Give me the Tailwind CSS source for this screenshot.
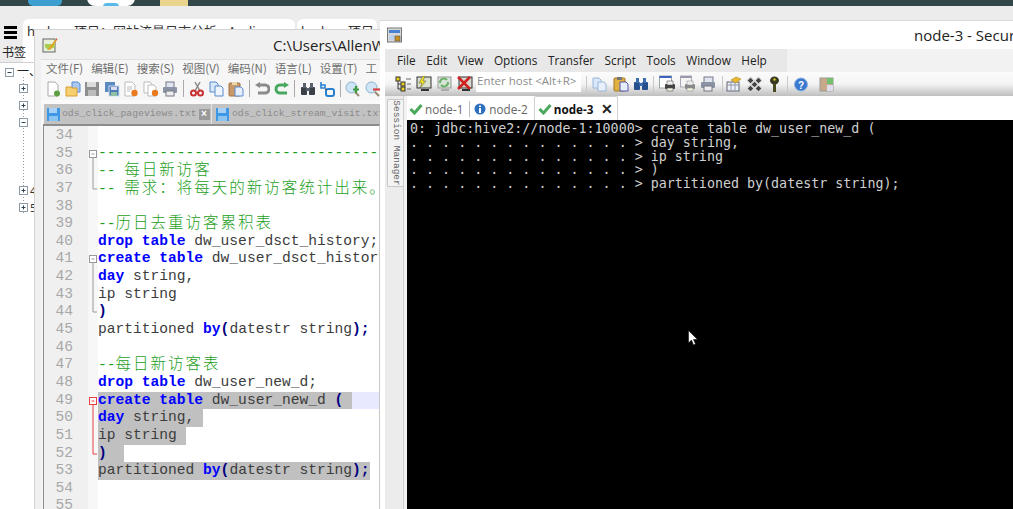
<!DOCTYPE html>
<html lang="zh-CN">
<head>
    <meta charset="UTF-8">
    <title>node-3 - SecureCRT</title>
    <script src="https://cdn.jsdelivr.net/npm/@tailwindcss/browser@4"></script>
</head>
<body class="bg-[#ececec]">
<div class="relative w-[1013px] h-[509px] overflow-hidden bg-[#ececec] font-['Noto_Sans','Noto_Sans_CJK_SC',sans-serif]">

    <!-- desktop strip -->
    <div class="relative h-[6px] bg-[#33474a] overflow-hidden">
        <div class="absolute left-[28px] top-[-10px] w-[34px] h-[16px] rounded-[5px] bg-[#3d9fd0]"></div>
        <div class="absolute left-[87px] top-[-12px] w-[48px] h-[18px] rounded-[8px] bg-white"></div>
        <div class="absolute left-[103px] top-[3px] w-[16px] h-[8px] rounded-full bg-[#58b9ea]"></div>
        <div class="absolute left-[160px] top-[-4px] w-[28px] h-[10px] bg-[#e8d48c]"></div>
    </div>

    <!-- browser behind -->
    <div class="h-[13px] bg-[#ececec]"></div>
    <div class="flex h-[43px] items-start">
        <div class="w-[23px] pl-[4px] pt-[7px] flex flex-col gap-[2.5px] shrink-0">
            <div class="w-[13px] h-[2.5px] bg-black"></div>
            <div class="w-[13px] h-[2.5px] bg-black"></div>
            <div class="w-[13px] h-[2.5px] bg-black"></div>
        </div>
        <div class="w-[272px] h-[43px] bg-white rounded-t-[6px] pl-[4px] pt-[2px] text-[13px] leading-[20px] text-[#333] whitespace-nowrap overflow-hidden">hadoop项目：网站流量日志分析 - Andi</div>
        <div class="ml-[2px] w-[80px] h-[43px] bg-white rounded-t-[6px] pl-[4px] pt-[2px] text-[13px] leading-[20px] text-[#333] whitespace-nowrap overflow-hidden">hadoop项目</div>
    </div>
    <div class="w-[34px] h-[10px] mt-[-16px] pl-[2px] text-[12px] leading-[14px] text-[#222] whitespace-nowrap">书签</div>
    <div class="relative mt-[6px] w-[34px] h-[447px] bg-white border-t border-[#cfcfcf] overflow-hidden">
        <svg class="absolute left-0 top-0" width="34" height="160" viewBox="0 0 34 160" fill="none">
            <path d="M23.5 14V152" stroke="#999" stroke-dasharray="1 2"/>
            <g stroke="#8d9aa8" fill="#fff">
                <rect x="5.5" y="5.5" width="8" height="8"/><rect x="19.5" y="21.5" width="8" height="8"/><rect x="19.5" y="38.5" width="8" height="8"/><rect x="19.5" y="55.5" width="8" height="8"/><rect x="19.5" y="123.5" width="8" height="8"/><rect x="19.5" y="140.5" width="8" height="8"/>
            </g>
            <path d="M7.5 9.5h4M21.5 59.5h4" stroke="#345"/>
            <path d="M21.5 25.5h4M23.5 23.5v4M21.5 42.5h4M23.5 40.5v4M21.5 127.5h4M23.5 125.5v4M21.5 144.5h4M23.5 142.5v4" stroke="#345"/>
        </svg>
        <div class="absolute left-[17px] top-[1px] text-[12px] leading-[16px] text-[#222]">一、</div>
        <div class="absolute left-[30px] top-[120px] text-[11px] leading-[16px] text-[#333]">4</div>
        <div class="absolute left-[30px] top-[137px] text-[11px] leading-[16px] text-[#333]">5</div>
    </div>

    <!-- notepad++ window -->
    <div class="absolute left-[34px] top-[29px] w-[346px] h-[480px] bg-[#f0f0f0] border-l border-t border-[#d4d4d4] flex flex-col overflow-hidden">
        <div class="h-[29px] shrink-0 flex items-center pl-[7px] relative">
            <svg width="16" height="16" viewBox="0 0 16 16"><rect x="1" y="2" width="12" height="13" fill="#e8efd8" stroke="#666"/><path d="M3 10l3 3 7-3V7H3z" fill="#a8cc50"/><path d="M6 12l8-10 1 1-7 10z" fill="#e8a020"/><path d="M14 1l1.500 1.500-1 1z" fill="#c02020"/></svg>
            <span class="absolute left-[238px] top-[3px] text-[15px] leading-[24px] text-[#222] whitespace-nowrap font-['Open_Sans',sans-serif]">C:\Users\AllenW</span>
        </div>
        <div class="ml-[6px] flex-1 flex flex-col bg-[#f6f6f6] min-h-0 border-t border-[#e0e0e0]">
            <!-- menu -->
            <div class="h-[17px] shrink-0 flex items-center pl-[5px] gap-[8px] text-[11.500px] leading-[17px] text-[#6e6e6e] whitespace-nowrap overflow-hidden font-['Noto_Sans_CJK_SC',sans-serif]">
                <span>文件(F)</span><span>编辑(E)</span><span>搜索(S)</span><span>视图(V)</span><span>编码(N)</span><span>语言(L)</span><span>设置(T)</span><span>工</span>
            </div>
            <!-- toolbar -->
            <div class="h-[23px] shrink-0 flex items-center pl-[4px] gap-[3.500px]">
                <svg class="shrink-0" width="16" height="16" viewBox="0 0 16 16"><path d="M3 1h7l3 3v11H3z" fill="#fff" stroke="#aaa"/><circle cx="12" cy="12.500" r="3" fill="#5aa040"/></svg>
                <svg class="shrink-0" width="16" height="16" viewBox="0 0 16 16"><path d="M7 1h6l2 2v8H7z" fill="#a8c8f0" stroke="#5a8ad0"/><path d="M1 6h5l1 1h5v8H1z" fill="#f5cf70" stroke="#d8a030"/></svg>
                <svg class="shrink-0" width="16" height="16" viewBox="0 0 16 16"><rect x="1" y="1" width="14" height="14" fill="#8e8e8e"/><rect x="3" y="1" width="9" height="5" fill="#ddd"/><rect x="4" y="9" width="8" height="6" fill="#bbb"/></svg>
                <svg class="shrink-0" width="16" height="16" viewBox="0 0 16 16"><rect x="1" y="1" width="10" height="10" fill="#5a8ac0"/><rect x="5" y="5" width="10" height="10" fill="#4a7ab8" stroke="#cde"/><rect x="7" y="6" width="6" height="3" fill="#dde"/><rect x="7" y="11" width="6" height="4" fill="#8fc0a0"/></svg>
                <svg class="shrink-0" width="16" height="16" viewBox="0 0 16 16"><path d="M2 1h7l3 3v11H2z" fill="#fff" stroke="#bbb"/><path d="M4 6h5M4 8h5M4 10h3" stroke="#bbb"/><circle cx="11.500" cy="12" r="3.200" fill="#ea7a20"/></svg>
                <svg class="shrink-0" width="16" height="16" viewBox="0 0 16 16"><path d="M1 1h6l2 2v9H1z" fill="#fff" stroke="#bbb"/><path d="M5 4h6l2 2v9H5z" fill="#fff" stroke="#bbb"/><circle cx="12" cy="12" r="3.200" fill="#ea7a20"/></svg>
                <svg class="shrink-0" width="16" height="16" viewBox="0 0 16 16"><rect x="4" y="1" width="8" height="6" fill="#dfe6f0" stroke="#778"/><rect x="1" y="6" width="14" height="6" rx="1" fill="#8a94a4"/><rect x="4" y="10" width="8" height="5" fill="#eee" stroke="#778"/></svg>
                <div class="w-px h-[17px] bg-[#aaa] mx-[1.500px] shrink-0"></div>
                <svg class="shrink-0" width="16" height="16" viewBox="0 0 16 16" fill="none"><path d="M11 1L6 10M6 1l5 9" stroke="#888" stroke-width="1.500"/><circle cx="4.500" cy="12" r="2.500" stroke="#c83030" stroke-width="2"/><circle cx="11.500" cy="12" r="2.500" stroke="#c83030" stroke-width="2"/></svg>
                <svg class="shrink-0" width="16" height="16" viewBox="0 0 16 16"><path d="M1 1h6l2 2v8H1z" fill="#d8e8fa" stroke="#5a8ad0"/><path d="M6 5h6l2 2v8H6z" fill="#eef5fd" stroke="#5a8ad0"/></svg>
                <svg class="shrink-0" width="16" height="16" viewBox="0 0 16 16"><rect x="1" y="2" width="11" height="13" rx="1" fill="#c89868" stroke="#a07040"/><rect x="4" y="1" width="5" height="3" fill="#e8d8a8"/><path d="M7 6h6l2 2v7H7z" fill="#e4effb" stroke="#5a8ad0"/></svg>
                <div class="w-px h-[17px] bg-[#aaa] mx-[1px] shrink-0"></div>
                <svg class="shrink-0" width="16" height="16" viewBox="0 0 16 16" fill="none"><path d="M5 4h6a3 3 0 0 1 0 8H4" stroke="#8a8a8a" stroke-width="3"/><path d="M1 4l5-3v6z" fill="#8a8a8a"/></svg>
                <svg class="shrink-0" width="16" height="16" viewBox="0 0 16 16" fill="none"><path d="M11 4H6a3 3 0 0 0 0 8h7" stroke="#48a860" stroke-width="3"/><path d="M15 4l-5-3v6z" fill="#48a860"/></svg>
                <div class="w-px h-[17px] bg-[#aaa] mx-[1px] shrink-0"></div>
                <svg class="shrink-0" width="16" height="16" viewBox="0 0 16 16"><rect x="1" y="6" width="6" height="8" rx="1" fill="#3a4048"/><rect x="9" y="6" width="6" height="8" rx="1" fill="#3a4048"/><rect x="3" y="2" width="3" height="5" fill="#59626c"/><rect x="10" y="2" width="3" height="5" fill="#59626c"/><rect x="6" y="7" width="4" height="3" fill="#59626c"/></svg>
                <svg class="shrink-0" width="16" height="16" viewBox="0 0 16 16" fill="none"><path d="M2 1v6h4V4H2" stroke="#2a80d0" stroke-width="1.600"/><rect x="7" y="8" width="8" height="7" rx="2" stroke="#2a80d0" stroke-width="2"/><path d="M6 8l2 1" stroke="#3a4048"/></svg>
                <div class="w-px h-[17px] bg-[#aaa] mx-[1px] shrink-0"></div>
                <svg class="shrink-0" width="16" height="16" viewBox="0 0 16 16"><circle cx="6.500" cy="6.500" r="5.500" fill="#cfe4f4" stroke="#8ab0cc"/><path d="M10 11l4 4" stroke="#9a8a70" stroke-width="2"/><path d="M11 5v7M8 8.500h6" stroke="#3a9a40" stroke-width="2.200"/></svg>
                <svg class="shrink-0" width="16" height="16" viewBox="0 0 16 16"><circle cx="6.500" cy="6.500" r="5.500" fill="#cfe4f4" stroke="#8ab0cc"/><path d="M10 11l4 4" stroke="#9a8a70" stroke-width="2"/><path d="M8 8.500h7" stroke="#d84040" stroke-width="2.200"/></svg>
            </div>
            <div class="h-[4px] shrink-0 bg-[#fafafa]"></div>
            <!-- file tabs -->
            <div class="h-[20px] shrink-0 ml-[3px] flex bg-[#c2c2c2] text-[9.750px] leading-[20px] text-[#8a8a8a] whitespace-nowrap font-['Liberation_Mono',monospace]">
                <div class="w-[168px] shrink-0 flex items-center pl-[2px] border-r border-[#e4e4e4]">
                    <svg class="shrink-0" width="15" height="15" viewBox="0 0 15 15"><rect x="1" y="1" width="13" height="13" fill="#3f97e8"/><rect x="3" y="1" width="8" height="5" fill="#a8d0f4"/><rect x="3" y="9" width="9" height="5" fill="#8cc4f0"/></svg>
                    <span class="ml-[1px]">ods_click_pageviews.txt</span>
                    <span class="ml-[2px] w-[11px] h-[11px] bg-[#9a9a9a] text-white text-[10px] leading-[11px] text-center font-bold">×</span>
                </div>
                <div class="flex-1 flex items-center pl-[3px] overflow-hidden">
                    <svg class="shrink-0" width="15" height="15" viewBox="0 0 15 15"><rect x="1" y="1" width="13" height="13" fill="#3f97e8"/><rect x="3" y="1" width="8" height="5" fill="#a8d0f4"/><rect x="3" y="9" width="9" height="5" fill="#8cc4f0"/></svg>
                    <span class="ml-[2px]">ods_click_stream_visit.txt</span>
                </div>
            </div>
            <!-- code -->
            <div class="ml-[2px] flex-1 min-h-0 flex flex-col [&>div]:shrink-0 [&>div>div]:shrink-0 bg-white border-l border-t-2 border-[#8c8c8c] border-r border-r-[#c8c8c8] overflow-hidden text-[14.600px] leading-[17.650px] text-[#3c3c3c] whitespace-pre font-['Liberation_Mono',monospace]">
                <div class="flex h-[1px]"><div class="w-[44px] bg-[#f0f0f0]"></div><div class="w-[10px] bg-[#f7f7f7]"></div></div>
                <div class="flex h-[17.650px]"><div class="w-[44px] pr-[15px] text-right text-[#a8a8a8] bg-[#f0f0f0]">34</div><div class="w-[10px] bg-[#f7f7f7]"></div><div></div></div>
                <div class="flex h-[17.650px]"><div class="w-[44px] pr-[15px] text-right text-[#a8a8a8] bg-[#f0f0f0]">35</div><div class="w-[10px] bg-[#f7f7f7]"><svg width="10" height="18" viewBox="0 0 10 18" fill="none" stroke="#999"><rect x="1.500" y="5.500" width="7" height="7" fill="#fff"/><path d="M3.500 9h3M5 13v5"/></svg></div><div class="text-[#1ba01b]">----------------------------------------</div></div>
                <div class="flex h-[17.650px]"><div class="w-[44px] pr-[15px] text-right text-[#a8a8a8] bg-[#f0f0f0]">36</div><div class="w-[10px] bg-[#f7f7f7]"><svg width="10" height="18" viewBox="0 0 10 18" fill="none" stroke="#999"><path d="M5 0v18"/></svg></div><div class="mt-[-2px] text-[#1ba01b]">-- <span class="text-[15.500px] tracking-[2px] font-['Noto_Sans_CJK_SC',sans-serif] font-light">每日新访客</span></div></div>
                <div class="flex h-[17.650px]"><div class="w-[44px] pr-[15px] text-right text-[#a8a8a8] bg-[#f0f0f0]">37</div><div class="w-[10px] bg-[#f7f7f7]"><svg width="10" height="18" viewBox="0 0 10 18" fill="none" stroke="#999"><path d="M5 0v9h4"/></svg></div><div class="mt-[-2px] text-[#1ba01b]">-- <span class="text-[15.500px] tracking-[2px] font-['Noto_Sans_CJK_SC',sans-serif] font-light">需求：将每天的新访客统计出来。</span></div></div>
                <div class="flex h-[17.650px]"><div class="w-[44px] pr-[15px] text-right text-[#a8a8a8] bg-[#f0f0f0]">38</div><div class="w-[10px] bg-[#f7f7f7]"></div><div></div></div>
                <div class="flex h-[17.650px]"><div class="w-[44px] pr-[15px] text-right text-[#a8a8a8] bg-[#f0f0f0]">39</div><div class="w-[10px] bg-[#f7f7f7]"></div><div class="mt-[-2px] text-[#1ba01b]">--<span class="text-[15.500px] tracking-[2px] font-['Noto_Sans_CJK_SC',sans-serif] font-light">历日去重访客累积表</span></div></div>
                <div class="flex h-[17.650px]"><div class="w-[44px] pr-[15px] text-right text-[#a8a8a8] bg-[#f0f0f0]">40</div><div class="w-[10px] bg-[#f7f7f7]"></div><div><b class="text-[#0000ff]">drop table</b> dw_user_dsct_history;</div></div>
                <div class="flex h-[17.650px]"><div class="w-[44px] pr-[15px] text-right text-[#a8a8a8] bg-[#f0f0f0]">41</div><div class="w-[10px] bg-[#f7f7f7]"><svg width="10" height="18" viewBox="0 0 10 18" fill="none" stroke="#999"><rect x="1.500" y="5.500" width="7" height="7" fill="#fff"/><path d="M3.500 9h3M5 13v5"/></svg></div><div><b class="text-[#0000ff]">create table</b> dw_user_dsct_history (</div></div>
                <div class="flex h-[17.650px]"><div class="w-[44px] pr-[15px] text-right text-[#a8a8a8] bg-[#f0f0f0]">42</div><div class="w-[10px] bg-[#f7f7f7]"><svg width="10" height="18" viewBox="0 0 10 18" fill="none" stroke="#999"><path d="M5 0v18"/></svg></div><div><b class="text-[#0000ff]">day</b> string,</div></div>
                <div class="flex h-[17.650px]"><div class="w-[44px] pr-[15px] text-right text-[#a8a8a8] bg-[#f0f0f0]">43</div><div class="w-[10px] bg-[#f7f7f7]"><svg width="10" height="18" viewBox="0 0 10 18" fill="none" stroke="#999"><path d="M5 0v18"/></svg></div><div>ip string</div></div>
                <div class="flex h-[17.650px]"><div class="w-[44px] pr-[15px] text-right text-[#a8a8a8] bg-[#f0f0f0]">44</div><div class="w-[10px] bg-[#f7f7f7]"><svg width="10" height="18" viewBox="0 0 10 18" fill="none" stroke="#999"><path d="M5 0v9h4"/></svg></div><div><b class="text-[#000080]">)</b></div></div>
                <div class="flex h-[17.650px]"><div class="w-[44px] pr-[15px] text-right text-[#a8a8a8] bg-[#f0f0f0]">45</div><div class="w-[10px] bg-[#f7f7f7]"></div><div>partitioned <b class="text-[#0000ff]">by</b><b class="text-[#000080]">(</b>datestr string<b class="text-[#000080]">);</b></div></div>
                <div class="flex h-[17.650px]"><div class="w-[44px] pr-[15px] text-right text-[#a8a8a8] bg-[#f0f0f0]">46</div><div class="w-[10px] bg-[#f7f7f7]"></div><div></div></div>
                <div class="flex h-[17.650px]"><div class="w-[44px] pr-[15px] text-right text-[#a8a8a8] bg-[#f0f0f0]">47</div><div class="w-[10px] bg-[#f7f7f7]"></div><div class="mt-[-2px] text-[#1ba01b]">--<span class="text-[15.500px] tracking-[2px] font-['Noto_Sans_CJK_SC',sans-serif] font-light">每日新访客表</span></div></div>
                <div class="flex h-[17.650px]"><div class="w-[44px] pr-[15px] text-right text-[#a8a8a8] bg-[#f0f0f0]">48</div><div class="w-[10px] bg-[#f7f7f7]"></div><div><b class="text-[#0000ff]">drop table</b> dw_user_new_d;</div></div>
                <div class="flex h-[17.650px]"><div class="w-[44px] pr-[15px] text-right text-[#a8a8a8] bg-[#f0f0f0]">49</div><div class="w-[10px] bg-[#f7f7f7]"><svg width="10" height="18" viewBox="0 0 10 18" fill="none" stroke="#e84040"><rect x="1.500" y="5.500" width="7" height="7" fill="#fff"/><path d="M3.500 9h3M5 13v5"/></svg></div><div class="flex-1 bg-[#e8e8ff]"><span class="inline-block h-[17.650px] bg-[#c0c0c0]"><b class="text-[#0000ff]">create table</b> dw_user_new_d <b class="text-[#000080]">(</b> </span></div></div>
                <div class="flex h-[17.650px]"><div class="w-[44px] pr-[15px] text-right text-[#a8a8a8] bg-[#f0f0f0]">50</div><div class="w-[10px] bg-[#f7f7f7]"><svg width="10" height="18" viewBox="0 0 10 18" fill="none" stroke="#e84040"><path d="M5 0v18"/></svg></div><div><span class="inline-block h-[17.650px] bg-[#c0c0c0]"><b class="text-[#0000ff]">day</b> string, </span></div></div>
                <div class="flex h-[17.650px]"><div class="w-[44px] pr-[15px] text-right text-[#a8a8a8] bg-[#f0f0f0]">51</div><div class="w-[10px] bg-[#f7f7f7]"><svg width="10" height="18" viewBox="0 0 10 18" fill="none" stroke="#e84040"><path d="M5 0v18"/></svg></div><div><span class="inline-block h-[17.650px] bg-[#c0c0c0]">ip string </span></div></div>
                <div class="flex h-[17.650px]"><div class="w-[44px] pr-[15px] text-right text-[#a8a8a8] bg-[#f0f0f0]">52</div><div class="w-[10px] bg-[#f7f7f7]"><svg width="10" height="18" viewBox="0 0 10 18" fill="none" stroke="#e84040"><path d="M5 0v9h4"/></svg></div><div><span class="inline-block h-[17.650px] bg-[#c0c0c0]"><b class="text-[#000080]">)</b>  </span></div></div>
                <div class="flex h-[17.650px]"><div class="w-[44px] pr-[15px] text-right text-[#a8a8a8] bg-[#f0f0f0]">53</div><div class="w-[10px] bg-[#f7f7f7]"></div><div><span class="inline-block h-[17.650px] bg-[#c0c0c0]">partitioned <b class="text-[#0000ff]">by</b><b class="text-[#000080]">(</b>datestr string<b class="text-[#000080]">);</b></span></div></div>
                <div class="flex h-[17.650px]"><div class="w-[44px] pr-[15px] text-right text-[#a8a8a8] bg-[#f0f0f0]">54</div><div class="w-[10px] bg-[#f7f7f7]"></div><div></div></div>
                <div class="flex h-[17.650px]"><div class="w-[44px] pr-[15px] text-right text-[#a8a8a8] bg-[#f0f0f0]">55</div><div class="w-[10px] bg-[#f7f7f7]"></div><div></div></div>
            </div>
        </div>
    </div>

    <!-- securecrt window -->
    <div class="absolute left-[380px] top-[20px] w-[633px] h-[489px] bg-white border-t border-[#d8d8d8] flex flex-col overflow-hidden">
        <div class="h-[28px] shrink-0 flex items-center pl-[7px] relative">
            <svg width="15" height="16" viewBox="0 0 15 16"><rect x="0.500" y="1" width="14" height="14" fill="#d8d8d8" stroke="#777"/><rect x="2" y="3" width="11" height="3" fill="#4a80d0"/><rect x="2" y="8" width="6" height="5" fill="#c0d0e8"/><rect x="8" y="9" width="5" height="5" fill="#c89020" stroke="#444" stroke-width="0.500"/></svg>
            <span class="absolute left-[534px] top-[2px] text-[15px] leading-[24px] text-[#222] whitespace-nowrap font-['Open_Sans',sans-serif]">node-3 - SecureCRT</span>
        </div>
        <div class="h-[23px] shrink-0 ml-[5px] flex bg-[#f2f2f2] text-[11.800px] leading-[23px] text-[#222] whitespace-nowrap font-['Open_Sans',sans-serif]">
            <div class="w-[402px] bg-[#e8e8e8] pl-[12px] flex gap-[10.500px]">
                <span>File</span><span>Edit</span><span>View</span><span>Options</span><span>Transfer</span><span>Script</span><span>Tools</span><span>Window</span><span>Help</span>
            </div>
        </div>
        <!-- toolbar -->
        <div class="h-[24px] shrink-0 ml-[5px] flex items-center pl-[10px] bg-gradient-to-b from-[#fbfbfb] via-[#f4f4f4] to-[#bfbfbf]">
            <svg class="shrink-0" width="16" height="16" viewBox="0 0 16 16" fill="none"><path d="M3 3v10M3 8h4M3 13h4" stroke="#333"/><rect x="1" y="1" width="4" height="4" fill="#e8d020" stroke="#333"/><rect x="6" y="6" width="4" height="4" fill="#e8d020" stroke="#333"/><rect x="6" y="11" width="4" height="4" fill="#e8d020" stroke="#333"/><path d="M11 3h5M12 8h4M12 13h4" stroke="#667"/></svg>
            <svg class="ml-[4px] shrink-0" width="17" height="16" viewBox="0 0 17 16"><rect x="2" y="1" width="14" height="11" fill="#d8e0d0" stroke="#333"/><path d="M8 0L4 7h3l-2 5 6-7H8l2-5z" fill="#f0e020" stroke="#554" stroke-width="0.500"/><rect x="6" y="13" width="8" height="2" fill="#333"/></svg>
            <svg class="ml-[4px] shrink-0" width="16" height="16" viewBox="0 0 16 16"><rect x="2" y="1" width="13" height="11" fill="#d8e4d8" stroke="#999"/><path d="M4 7a4 4 0 0 1 7-3M12 6a4 4 0 0 1-7 3" fill="none" stroke="#6ab06a" stroke-width="2"/><rect x="5" y="13" width="8" height="2" fill="#aaa"/></svg>
            <svg class="ml-[4px] shrink-0" width="17" height="16" viewBox="0 0 17 16"><rect x="3" y="1" width="13" height="11" fill="#d8d8d0" stroke="#333"/><path d="M2 1l12 12M14 1L2 13" stroke="#d02020" stroke-width="2.500"/><rect x="6" y="13" width="8" height="2" fill="#333"/></svg>
            <div class="ml-[3px] w-[105px] h-[20px] self-start bg-white pl-[1px] text-[11.500px] leading-[18px] text-[#8c8c8c] whitespace-nowrap font-['Open_Sans',sans-serif]">Enter host &lt;Alt+R&gt;</div>
            <div class="ml-[5px] w-px h-[16px] bg-[#c8c8c8] shrink-0"></div>
            <svg class="ml-[5px] shrink-0" width="15" height="15" viewBox="0 0 15 15"><path d="M1 1h6l2 2v8H1z" fill="#d8e8fa" stroke="#9ab8da"/><path d="M6 5h6l2 2v7H6z" fill="#e8f0fb" stroke="#9ab8da"/></svg>
            <svg class="ml-[6px] shrink-0" width="16" height="16" viewBox="0 0 16 16"><rect x="1" y="2" width="11" height="13" rx="1" fill="#e0b040" stroke="#a07820"/><rect x="4" y="1" width="5" height="3" fill="#777"/><path d="M7 6h6l2 2v7H7z" fill="#e4effb" stroke="#55a"/></svg>
            <svg class="ml-[4px] shrink-0" width="16" height="16" viewBox="0 0 16 16"><rect x="1" y="6" width="6" height="8" rx="1" fill="#26508c"/><rect x="9" y="6" width="6" height="8" rx="1" fill="#26508c"/><rect x="3" y="2" width="3" height="5" fill="#3c6cb0"/><rect x="10" y="2" width="3" height="5" fill="#3c6cb0"/><rect x="6" y="7" width="4" height="3" fill="#3c6cb0"/></svg>
            <div class="ml-[4px] w-px h-[16px] bg-[#c8c8c8] shrink-0"></div>
            <svg class="ml-[5px] shrink-0" width="17" height="18" viewBox="0 0 17 18"><rect x="0.500" y="1" width="12" height="12" fill="#fff" stroke="#9aa"/><rect x="0.500" y="1" width="12" height="2" fill="#4060c0"/><rect x="6" y="9" width="10" height="5" rx="1" fill="#444"/><rect x="8" y="6" width="6" height="4" fill="#eee" stroke="#444" stroke-width="0.500"/><rect x="8" y="13" width="6" height="3" fill="#eed" stroke="#444" stroke-width="0.500"/></svg>
            <svg class="ml-[4px] shrink-0" width="16" height="18" viewBox="0 0 16 18"><rect x="0.500" y="1" width="11" height="11" fill="#f4f4f4" stroke="#aab"/><rect x="0.500" y="1" width="11" height="2" fill="#99a"/><rect x="5" y="9" width="10" height="5" rx="1" fill="#888"/><rect x="7" y="6" width="6" height="4" fill="#eee" stroke="#888" stroke-width="0.500"/><rect x="7" y="13" width="6" height="3" fill="#eed" stroke="#888" stroke-width="0.500"/></svg>
            <svg class="ml-[4px] shrink-0" width="16" height="16" viewBox="0 0 16 16"><rect x="4" y="1" width="9" height="6" fill="#dfe6f0" stroke="#778"/><rect x="1" y="6" width="14" height="6" rx="1" fill="#8a94a4"/><rect x="4" y="10" width="8" height="5" fill="#eee" stroke="#778"/></svg>
            <div class="ml-[6px] w-px h-[16px] bg-[#c8c8c8] shrink-0"></div>
            <svg class="ml-[3px] shrink-0" width="16" height="16" viewBox="0 0 16 16"><rect x="1" y="6" width="12" height="9" fill="#e8f0f8" stroke="#667"/><path d="M1 9h12M5 6v9M9 6v9" stroke="#99a"/><path d="M5 4l5-3 5 2-5 4z" fill="#e8b830" stroke="#a87810" stroke-width="0.500"/></svg>
            <svg class="ml-[4px] shrink-0" width="17" height="17" viewBox="0 0 17 17"><g fill="#444" stroke="#ddd" stroke-width="1"><rect x="2" y="2" width="5" height="5" transform="rotate(45 4.500 4.500)"/><rect x="10" y="2" width="5" height="5" transform="rotate(45 12.500 4.500)"/><rect x="6" y="6" width="5" height="5" transform="rotate(45 8.500 8.500)"/><rect x="2" y="10" width="5" height="5" transform="rotate(45 4.500 12.500)"/><rect x="10" y="10" width="5" height="5" transform="rotate(45 12.500 12.500)"/></g></svg>
            <svg class="ml-[5px] shrink-0" width="13" height="17" viewBox="0 0 13 17"><ellipse cx="6.500" cy="4.500" rx="4.500" ry="4" fill="#3a3a20"/><circle cx="6.500" cy="3.500" r="1.200" fill="#d8c830"/><rect x="5" y="8" width="3" height="8" fill="#4a4a20"/></svg>
            <div class="ml-[6px] w-px h-[16px] bg-[#c8c8c8] shrink-0"></div>
            <svg class="ml-[6px] shrink-0" width="14" height="15" viewBox="0 0 14 15"><circle cx="7" cy="7.500" r="6.500" fill="#3a78d0" stroke="#8ab0e0"/><text x="7" y="11.500" text-anchor="middle" font-size="10" font-weight="700" fill="#fff" font-family="Liberation Sans">?</text></svg>
            <svg class="ml-[11px] shrink-0" width="15" height="16" viewBox="0 0 15 16"><rect x="1" y="2" width="13" height="13" fill="#c8a888" stroke="#999"/><rect x="8" y="2" width="6" height="6" fill="#70c070"/><rect x="8" y="9" width="6" height="6" fill="#dde"/></svg>
        </div>
        <!-- body -->
        <div class="flex-1 min-h-0 flex">
            <div class="w-[5px] shrink-0 bg-white"></div>
            <div class="w-[18px] shrink-0 bg-[#ececec] pt-[3px] pl-[2px]">
                <div class="w-[16px] h-[88px] bg-[#f4f4f4] border border-[#c8c8c8] border-r-0 rounded-l-[2px] flex items-center justify-center">
                    <span class="block rotate-90 whitespace-nowrap text-[9.500px] leading-[10px] text-[#666] font-['Liberation_Mono',monospace]">Session Manager</span>
                </div>
            </div>
            <div class="w-[4px] shrink-0 bg-[#f2f2f2] border-l border-[#cfcfcf]"></div>
            <div class="flex-1 min-w-0 flex flex-col">
                <div class="h-[24px] shrink-0 flex items-end bg-white text-[11.700px] leading-[20px] whitespace-nowrap font-['Open_Sans',sans-serif]">
                    <div class="flex items-center h-[22px] pl-[2px] text-[#666]">
                        <svg width="14" height="12" viewBox="0 0 14 12" fill="none"><path d="M1.500 6l4 4 7-8" stroke="#4aa85a" stroke-width="3"/></svg>
                        <span class="ml-[2px]">node-1</span>
                    </div>
                    <div class="ml-[6px] mb-[3px] w-px h-[16px] bg-[#bbb]"></div>
                    <div class="flex items-center h-[22px] ml-[4px] text-[#666]">
                        <svg width="12" height="12" viewBox="0 0 12 12"><circle cx="6" cy="6" r="5.500" fill="#2f6fc0"/><rect x="5" y="5" width="2" height="5" fill="#fff"/><rect x="5" y="2.500" width="2" height="1.500" fill="#fff"/></svg>
                        <span class="ml-[3px]">node-2</span>
                    </div>
                    <div class="ml-[6px] h-[24px] w-[84px] flex items-center bg-white border border-b-0 border-[#cfcfcf] rounded-t-[2px] pl-[3px] text-[#111] font-bold">
                        <svg width="14" height="12" viewBox="0 0 14 12" fill="none"><path d="M1.500 6l4 4 7-8" stroke="#4aa85a" stroke-width="3"/></svg>
                        <span class="ml-[2px]">node-3</span>
                        <span class="ml-[8px] text-[14px] leading-[14px] text-[#222]">✕</span>
                    </div>
                </div>
                <div class="relative flex-1 bg-black pl-[3px] pt-[2px] text-[13.330px] leading-[13.750px] text-[#cfcfcf] whitespace-pre font-['DejaVu_Sans_Mono',monospace]"><div>0: jdbc:hive2://node-1:10000> create table dw_user_new_d (</div><div>. . . . . . . . . . . . . . > day string,</div><div>. . . . . . . . . . . . . . > ip string</div><div>. . . . . . . . . . . . . . > )</div><div>. . . . . . . . . . . . . . > partitioned by(datestr string);</div>
                    <svg class="absolute left-[281px] top-[210px]" width="10" height="16" viewBox="0 0 10 16"><path d="M0.500 0.500v12.500l3-3 2 5 2-1-2-4.500h4z" fill="#fff" stroke="#000" stroke-width="0.500"/></svg>
                </div>
            </div>
        </div>
    </div>
</div>
</body>
</html>
